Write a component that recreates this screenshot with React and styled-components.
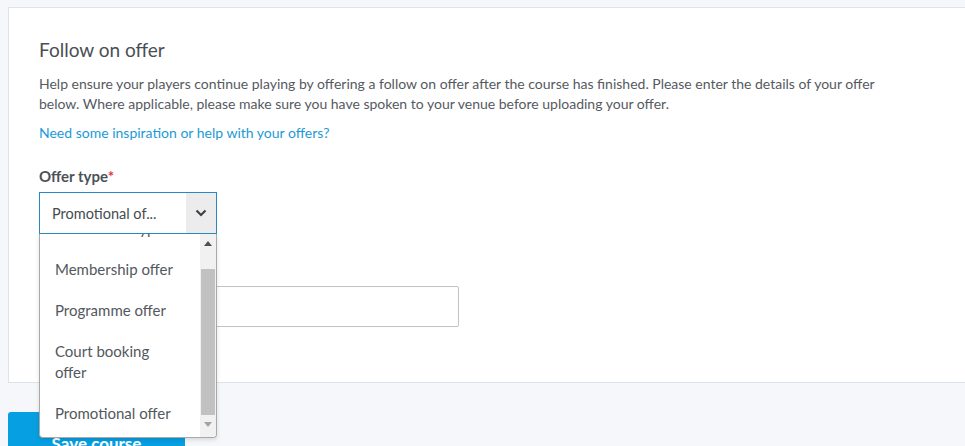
import React from 'react';
import styled, { createGlobalStyle } from 'styled-components';

const GlobalStyle = createGlobalStyle`
    html, body {
        margin: 0;
        padding: 0;
        background: #f5f7fb;
    }

    body {
        font-family: Lato, "Open Sans", sans-serif;
        color: #53585d;
    }
`;

const offerTypes = ['Select offer type', 'Membership offer', 'Programme offer', 'Court booking offer', 'Promotional offer'];

const App = () => {
    const [selected] = React.useState('Promotional offer');

    return (
        <Page>
            <GlobalStyle />
            <Card>
                <Title>Follow on offer</Title>
                <Intro>
                    Help ensure your players continue playing by offering a follow on offer after the course has finished. Please enter the details of your offer below. Where applicable, please make sure you have spoken to your venue before uploading your offer.
                </Intro>
                <HelpLink href="#">Need some inspiration or help with your offers?</HelpLink>

                <Field>
                    <Label>Offer type<Required>*</Required></Label>
                    <SelectWrap>
                        <Select>
                            <SelectValue>Promotional of...</SelectValue>
                            <SelectArrow>
                                <svg width="12" height="8" viewBox="0 0 12 8">
                                    <polyline points="1.5,1.5 6,6 10.5,1.5" fill="none" stroke="#3d4348" strokeWidth="2.2" />
                                </svg>
                            </SelectArrow>
                        </Select>
                        <Dropdown>
                            <Options>
                                <OptionList offset={26}>
                                    {offerTypes.map(op => (
                                        <Option key={op} className={op === selected ? 'active' : ''}>{op}</Option>
                                    ))}
                                </OptionList>
                            </Options>
                            <Scrollbar>
                                <ScrollArrow>
                                    <svg width="8" height="5" viewBox="0 0 8 5"><polygon points="0,5 4,0 8,5" fill="#505050" /></svg>
                                </ScrollArrow>
                                <Track>
                                    <Thumb />
                                </Track>
                                <ScrollArrow>
                                    <svg width="8" height="5" viewBox="0 0 8 5"><polygon points="0,0 8,0 4,5" fill="#a3a3a3" /></svg>
                                </ScrollArrow>
                            </Scrollbar>
                        </Dropdown>
                    </SelectWrap>
                </Field>

                <Field second>
                    <Label>Offer title<Required>*</Required></Label>
                    <Input type="text" />
                </Field>
            </Card>

            <Actions>
                <SaveButton>Save course</SaveButton>
            </Actions>
        </Page>
    );
}

export default App;

const Page = styled.div`
    height: 100vh;
    overflow: hidden;
    padding: 7px 0 0 8px;
    box-sizing: border-box;
`;

const Card = styled.div`
    background: #fff;
    border: 1px solid #dde3eb;
    margin-right: -20px;
    padding: 30px 30px 55px;
`;

const Title = styled.h2`
    margin: 0;
    font-size: 19px;
    line-height: 24px;
    font-weight: 400;
    color: #4a4f54;
`;

const Intro = styled.p`
    margin: 12px 0 0;
    max-width: 845px;
    font-size: 14px;
    line-height: 20px;
    color: #555a5f;
`;

const HelpLink = styled.a`
    display: block;
    margin-top: 9px;
    font-size: 14px;
    line-height: 20px;
    color: #1c9ad6;
    text-decoration: none;
`;

const Field = styled.div`
    margin-top: ${p => p.second ? '26px' : '23px'};
    display: flex;
    flex-direction: column;
    align-items: flex-start;
    gap: 6px;
`;

const Label = styled.label`
    font-size: 15px;
    line-height: 20px;
    font-weight: 700;
    color: #4d5257;
`;

const Required = styled.span`
    color: #e0383e;
`;

const SelectWrap = styled.div`
    position: relative;
    width: 178px;
    z-index: 2;
`;

const Select = styled.div`
    display: flex;
    height: 42px;
    box-sizing: border-box;
    border: 1px solid #2a89c4;
    background: #fff;
`;

const SelectValue = styled.div`
    flex: 1;
    display: flex;
    align-items: center;
    padding-left: 12px;
    font-size: 14.5px;
    color: #464b50;
    white-space: nowrap;
`;

const SelectArrow = styled.div`
    width: 30px;
    display: flex;
    align-items: center;
    justify-content: center;
    background: #ececec;
`;

const Dropdown = styled.div`
    position: absolute;
    top: 100%;
    left: 0;
    width: 178px;
    height: 204px;
    box-sizing: border-box;
    display: flex;
    background: #fff;
    border: 1px solid #a9a9a9;
    border-top: none;
    border-radius: 0 0 4px 4px;
    box-shadow: 0 2px 4px rgba(0, 0, 0, 0.12);
    overflow: hidden;
`;

const Options = styled.div`
    flex: 1;
    overflow: hidden;
`;

const OptionList = styled.ul`
    list-style: none;
    margin: ${p => -p.offset}px 0 0;
    padding: 0;
`;

const Option = styled.li`
    padding: 10px 20px 10px 15px;
    font-size: 15px;
    line-height: 21px;
    color: #53585d;
`;

const Scrollbar = styled.div`
    width: 16px;
    display: flex;
    flex-direction: column;
    background: #f1f1f1;
    padding-bottom: 4px;
`;

const ScrollArrow = styled.div`
    height: 18px;
    display: flex;
    align-items: center;
    justify-content: center;
`;

const Track = styled.div`
    flex: 1;
    display: flex;
    flex-direction: column;
    justify-content: flex-end;
    padding: 0 1px;
`;

const Thumb = styled.div`
    height: 146px;
    background: #c1c1c1;
`;

const Input = styled.input`
    width: 420px;
    height: 41px;
    box-sizing: border-box;
    border: 1px solid #c3c3c3;
    border-radius: 2px;
    outline: none;
`;

const Actions = styled.div`
    margin-top: 29px;
`;

const SaveButton = styled.button`
    width: 177px;
    height: 62px;
    border: none;
    border-radius: 3px;
    background: #069fe2;
    color: #fff;
    font-family: Lato, "Open Sans", sans-serif;
    font-size: 17px;
    font-weight: 700;
`;
